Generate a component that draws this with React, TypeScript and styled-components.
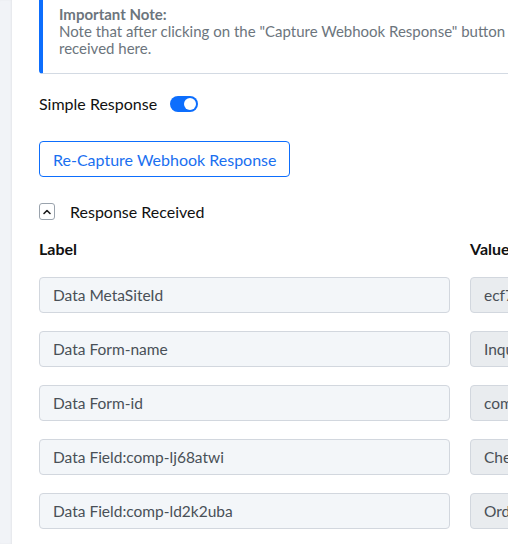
import React from "react";
import styled, { createGlobalStyle } from "styled-components";

const GlobalStyle = createGlobalStyle`
  html, body {
    margin: 0;
    padding: 0;
    background: #ffffff;
    overflow: hidden;
  }
  body {
    font-family: "Lato", "Open Sans", sans-serif;
    color: #212529;
  }
`;

const Page = styled.div`
  display: flex;
  flex-direction: row;
  width: 508px;
  height: 544px;
  overflow: hidden;
`;

const SideStrip = styled.div`
  flex: 0 0 12px;
  background-color: #f1f3f7;
  box-shadow: inset -1px 0 2px rgba(0, 0, 0, 0.05);
`;

const Main = styled.div`
  flex: 0 0 auto;
  width: 860px;
  padding-left: 27px;
  display: flex;
  flex-direction: column;
`;

const Note = styled.div`
  border-left: 4px solid #0d6efd;
  border-bottom: 1px solid #d3dae3;
  border-bottom-left-radius: 4px;
  padding: 6px 16px 16px 16px;
  color: #6c757d;
  font-size: 15px;
  line-height: 17px;
`;

const NoteTitle = styled.div`
  font-weight: 700;
  font-size: 15px;
`;

const NoteLine = styled.div`
  white-space: nowrap;
`;

const ToggleRow = styled.div`
  display: flex;
  align-items: center;
  gap: 13px;
  margin-top: 19px;
  height: 20px;
  font-size: 16px;
  color: #111111;
`;

const Switch = styled.span<{ on: boolean }>`
  position: relative;
  display: inline-block;
  width: 28px;
  height: 16px;
  border-radius: 8px;
  margin-top: 2px;
  background-color: ${(p) => (p.on ? "#0d6efd" : "#ced4da")};

  &::after {
    content: "";
    position: absolute;
    top: 2px;
    left: ${(p) => (p.on ? "14px" : "2px")};
    width: 12px;
    height: 12px;
    border-radius: 50%;
    background: #ffffff;
  }
`;

const OutlineButton = styled.button`
  align-self: flex-start;
  margin-top: 28px;
  height: 36px;
  padding: 0 13px;
  border: 1px solid #0d6efd;
  border-radius: 4px;
  background: #ffffff;
  color: #1a6ff0;
  font-family: inherit;
  font-size: 16px;
  cursor: pointer;
`;

const CollapseRow = styled.div`
  display: flex;
  align-items: center;
  gap: 15px;
  margin-top: 26px;
  height: 17px;
  font-size: 16px;
  color: #111111;
`;

const ChevronBox = styled.span`
  display: inline-flex;
  align-items: center;
  justify-content: center;
  width: 14px;
  height: 15px;
  border: 1px solid #9aa3ad;
  border-radius: 3px;
`;

const Grid = styled.div`
  display: grid;
  grid-template-columns: 411px 411px;
  column-gap: 20px;
  row-gap: 18px;
  margin-top: 19px;
`;

const HeaderCell = styled.div`
  font-weight: 700;
  font-size: 16px;
  line-height: 20px;
  color: #111111;
`;

const Field = styled.div<{ locked?: boolean }>`
  box-sizing: border-box;
  height: 36px;
  display: flex;
  align-items: center;
  padding: 0 13px;
  border: 1px solid #d2d7de;
  border-radius: 4px;
  background-color: ${(p) => (p.locked ? "#e9ecef" : "#f3f6f9")};
  color: #495057;
  font-size: 15.5px;
  white-space: nowrap;
  overflow: hidden;
`;

const rows = [
  { label: "Data MetaSiteId", value: "ecf72c3e-1a4d-4b0e" },
  { label: "Data Form-name", value: "Inquiry Form" },
  { label: "Data Form-id", value: "comp-lj68a1b2" },
  { label: "Data Field:comp-lj68atwi", value: "Checked" },
  { label: "Data Field:comp-ld2k2uba", value: "Order" },
];

const ChevronUp = () => (
  <svg width="10" height="10" viewBox="0 0 10 10" fill="none">
    <path d="M2 6.5 L5 3.5 L8 6.5" stroke="#1d1d1d" strokeWidth="1.6" strokeLinecap="round" strokeLinejoin="round" />
  </svg>
);

export default function App() {
  return (
    <>
      <GlobalStyle />
      <Page>
        <SideStrip />
        <Main>
          <Note>
            <NoteTitle>Important Note:</NoteTitle>
            <NoteLine>
              Note that after clicking on the "Capture Webhook Response" button and sending data, the response will be
            </NoteLine>
            <NoteLine>received here.</NoteLine>
          </Note>

          <ToggleRow>
            Simple Response
            <Switch on={true} />
          </ToggleRow>

          <OutlineButton>Re-Capture Webhook Response</OutlineButton>

          <CollapseRow>
            <ChevronBox>
              <ChevronUp />
            </ChevronBox>
            Response Received
          </CollapseRow>

          <Grid>
            <HeaderCell>Label</HeaderCell>
            <HeaderCell>Value</HeaderCell>
            {rows.map((r) => (
              <React.Fragment key={r.label}>
                <Field>{r.label}</Field>
                <Field locked>{r.value}</Field>
              </React.Fragment>
            ))}
          </Grid>
        </Main>
      </Page>
    </>
  );
}
